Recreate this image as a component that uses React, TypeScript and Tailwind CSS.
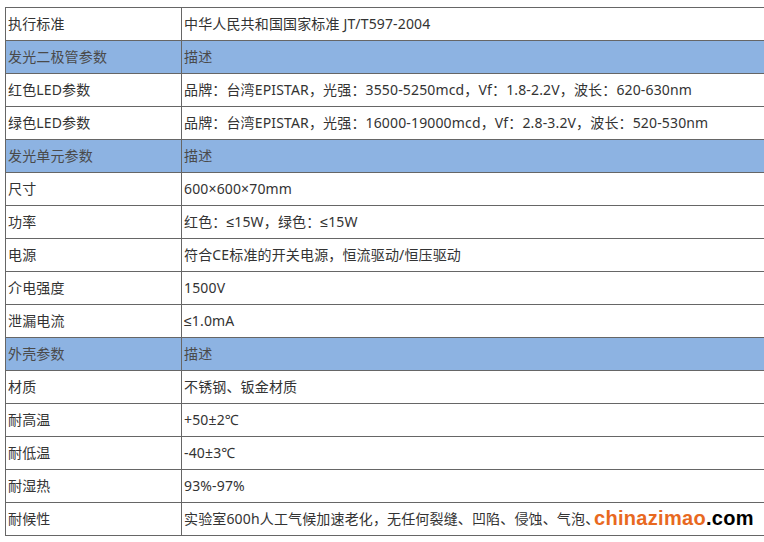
const rows: { k: string; v: string; head?: boolean }[] = [
  { k: '执行标准', v: '中华人民共和国国家标准 JT/T597-2004' },
  { k: '发光二极管参数', v: '描述', head: true },
  { k: '红色LED参数', v: '品牌：台湾EPISTAR，光强：3550-5250mcd，Vf：1.8-2.2V，波长：620-630nm' },
  { k: '绿色LED参数', v: '品牌：台湾EPISTAR，光强：16000-19000mcd，Vf：2.8-3.2V，波长：520-530nm' },
  { k: '发光单元参数', v: '描述', head: true },
  { k: '尺寸', v: '600×600×70mm' },
  { k: '功率', v: '红色：≤15W，绿色：≤15W' },
  { k: '电源', v: '符合CE标准的开关电源，恒流驱动/恒压驱动' },
  { k: '介电强度', v: '1500V' },
  { k: '泄漏电流', v: '≤1.0mA' },
  { k: '外壳参数', v: '描述', head: true },
  { k: '材质', v: '不锈钢、钣金材质' },
  { k: '耐高温', v: '+50±2℃' },
  { k: '耐低温', v: '-40±3℃' },
  { k: '耐湿热', v: '93%-97%' },
  { k: '耐候性', v: '实验室600h人工气候加速老化，无任何裂缝、凹陷、侵蚀、气泡、' },
];

export default function App() {
  return (
    <div
      className="w-[764px] h-[542px] overflow-hidden bg-white pl-[5px] pt-[7px] text-[14px] tracking-[0.15px] text-[#333]"
      style={{ fontFamily: '"Noto Sans", "Liberation Sans", "Noto Sans CJK SC", sans-serif' }}
    >
      <table className="w-[820px] border-collapse table-fixed">
        <colgroup>
          <col className="w-[176px]" />
          <col />
        </colgroup>
        <tbody>
          {rows.map((r, i) => (
            <tr key={i} className={r.head ? 'bg-[#8db3e2]' : ''}>
              <td className={`h-[33px] border border-[#666] px-[2px] pb-[1px] leading-none whitespace-nowrap ${r.head ? 'text-[#4a4a4a]' : ''}`}>
                {r.k}
              </td>
              <td className={`relative h-[33px] border border-[#666] px-[2px] pb-[1px] leading-none whitespace-nowrap ${r.head ? 'text-[#4a4a4a]' : ''}`}>
                {r.v}
                {i === rows.length - 1 && (
                  <span
                    className="absolute left-[410px] top-[5px] bg-white pl-[2px] text-[20px] font-bold leading-[21px] tracking-[0.3px]"
                    style={{ fontFamily: '"Liberation Sans", Arial, sans-serif' }}
                  >
                    <span className="text-[#e8691f]">chinazimao</span>
                    <span className="text-black">.com</span>
                  </span>
                )}
              </td>
            </tr>
          ))}
        </tbody>
      </table>
    </div>
  );
}
